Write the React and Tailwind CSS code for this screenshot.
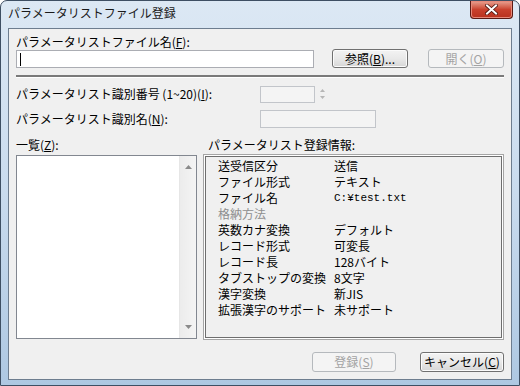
import React from "react";

const F = "font-['Noto_Sans_CJK_JP','Noto_Sans_CJK_SC',sans-serif]";

function Btn({ children, disabled, className = "" }) {
  return (
    <div
      className={
        "flex items-center justify-center rounded-[3px] border text-[12px] leading-[14px] " +
        (disabled
          ? "border-[#b5b9bd] bg-[#f4f4f4] text-[#a3a3a3] "
          : "border-[#707070] bg-gradient-to-b from-[#f3f3f3] via-[#e9e9e9] to-[#d6d6d6] text-black shadow-[inset_0_0_0_1px_#fbfbfb] ") +
        className
      }
    >
      {children}
    </div>
  );
}

const U = ({ c }) => <span className="underline underline-offset-[1px]">{c}</span>;

const rows = [
  ["送受信区分", "送信"],
  ["ファイル形式", "テキスト"],
  ["ファイル名", "C:¥test.txt", false, true],
  ["格納方法", "", true],
  ["英数カナ変換", "デフォルト"],
  ["レコード形式", "可変長"],
  ["レコード長", "128バイト"],
  ["タブストップの変換", "8文字"],
  ["漢字変換", "新JIS"],
  ["拡張漢字のサポート", "未サポート"],
];

export default function App() {
  return (
    <div className={"w-[520px] h-[386px] overflow-hidden " + F}>
      <div className="w-[520px] h-[386px] flex flex-col border border-[#3e4f63] rounded-t-[7px] bg-gradient-to-b from-[#dce8f4] via-[#c9dbee] to-[#aec8e2]">
        {/* title bar */}
        <div className="h-[27px] flex items-start justify-between">
          <div className="pl-[7px] pt-[5px] text-[12px] leading-[14px] text-[#1a1a1a]">
            パラメータリストファイル登録
          </div>
          <div className="mr-[6px] w-[43px] h-[18px] rounded-b-[4px] border border-t-0 border-[#5a1a14] bg-gradient-to-b from-[#e8a293] via-[#c9412d] to-[#b8311e] flex items-center justify-center shadow-[inset_0_0_0_1px_#e7897a]">
            <svg width="13" height="11" viewBox="0 0 13 11">
              <path d="M2 1.5 L11 9.5 M11 1.5 L2 9.5" stroke="#4a140e" strokeWidth="3.6" strokeLinecap="square" />
              <path d="M2 1.5 L11 9.5 M11 1.5 L2 9.5" stroke="#ffffff" strokeWidth="2" strokeLinecap="square" />
            </svg>
          </div>
        </div>
        {/* client */}
        <div className="mx-[7px] h-[352px] border border-[#6d7d8f] bg-[#f0f0f0] flex flex-col px-[7px] text-[12px] leading-[14px] text-black">
          <div className="mt-[6px] h-[14px]">
            パラメータリストファイル名(<U c="F" />):
          </div>
          <div className="flex items-end h-[19px]">
            <div className="w-[298px] h-[18px] border border-[#abadb3] bg-white flex items-center pl-[3px]">
              <div className="w-[1px] h-[13px] bg-black" />
            </div>
            <Btn className="ml-[18px] w-[76px] h-[19px]">
              参照(<U c="B" />)...
            </Btn>
            <Btn disabled className="ml-[20px] w-[76px] h-[19px]">
              開く(<U c="O" />)
            </Btn>
          </div>
          <div className="mt-[7px] h-[2px] bg-[#7a7a7a]" />
          <div className="h-[1px] bg-white" />
          <div className="mt-[7px] h-[18px] flex items-center">
            <div className="w-[244px]">
              パラメータリスト識別番号 (1~20)(<U c="I" />):
            </div>
            <div className="w-[55px] h-[17px] border border-[#c2c5ca] bg-[#f4f4f4]" />
            <svg className="ml-[3px]" width="9" height="16" viewBox="0 0 9 16">
              <path d="M2 6 L4.5 3 L7 6 Z" fill="#b6b6b6" />
              <path d="M2 10 L4.5 13 L7 10 Z" fill="#b6b6b6" />
            </svg>
          </div>
          <div className="mt-[7px] h-[18px] flex items-center">
            <div className="w-[244px]">
              パラメータリスト識別名(<U c="N" />):
            </div>
            <div className="w-[116px] h-[18px] border border-[#c2c5ca] bg-[#f4f4f4]" />
          </div>
          <div className="mt-[10px] h-[14px] flex">
            <div className="w-[192px]">
              一覧(<U c="Z" />):
            </div>
            <div>パラメータリスト登録情報:</div>
          </div>
          <div className="mt-[2px] flex h-[186px]">
            <div className="mt-[1px] w-[181px] h-[184px] border border-[#828790] bg-white flex justify-end">
              <div className="w-[17px] h-full bg-gradient-to-r from-[#ececec] to-[#f4f4f4] border-l border-[#e6e6e6] flex flex-col items-center justify-between py-[8px]">
                <svg width="9" height="6" viewBox="0 0 9 6">
                  <path d="M1 5 L4.5 1 L8 5 Z" fill="#8a8a8a" />
                </svg>
                <svg width="9" height="6" viewBox="0 0 9 6">
                  <path d="M1 1 L4.5 5 L8 1 Z" fill="#8a8a8a" />
                </svg>
              </div>
            </div>
            <div className="ml-[6px] w-[301px] h-[186px] border border-[#a5a5a5] p-[1px] bg-white">
              <div className="w-full h-full border border-[#6e6e6e] bg-[#f0f0f0] pt-[1px] pl-[12px]">
                {rows.map(([k, v, dim, mono]) => (
                  <div key={k} className="flex h-[16px] items-center">
                    <div className={"w-[116px] whitespace-nowrap " + (dim ? "text-[#8e8e8e]" : "")}>{k}</div>
                    <div
                      className={
                        "whitespace-nowrap " +
                        (mono ? "font-['Liberation_Mono',monospace] text-[11px] leading-[14px]" : "")
                      }
                    >
                      {v}
                    </div>
                  </div>
                ))}
              </div>
            </div>
          </div>
          <div className="mt-[12px] flex justify-end">
            <Btn disabled className="w-[84px] h-[20px]">
              登録(<U c="S" />)
            </Btn>
            <Btn className="ml-[24px] w-[84px] h-[20px]">
              キャンセル(<U c="C" />)
            </Btn>
          </div>
        </div>
      </div>
    </div>
  );
}
